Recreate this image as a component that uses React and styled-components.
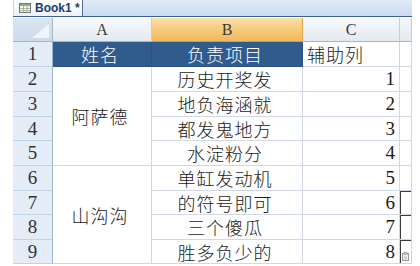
import styled, { createGlobalStyle } from "styled-components";

const GlobalStyle = createGlobalStyle`
  html, body {
    margin: 0;
    padding: 0;
    background: #ffffff;
    overflow: hidden;
  }
`;

const rows = [
  { n: 1, h: 25 },
  { n: 2, h: 25 },
  { n: 3, h: 25 },
  { n: 4, h: 24 },
  { n: 5, h: 25 },
  { n: 6, h: 25 },
  { n: 7, h: 24 },
  { n: 8, h: 25 },
  { n: 9, h: 24 },
];

const groups = [
  { name: "阿萨德", start: 2 },
  { name: "山沟沟", start: 6 },
];

const tasks = [
  "历史开奖发",
  "地负海涵就",
  "都发鬼地方",
  "水淀粉分",
  "单缸发动机",
  "的符号即可",
  "三个傻瓜",
  "胜多负少的",
];

function WorkbookIcon() {
  return (
    <svg width="12" height="10" viewBox="0 0 12 10">
      <rect x="0.5" y="0.5" width="11" height="9" fill="#f4f6f0" stroke="#6d7d6a" />
      <rect x="1" y="1" width="10" height="2" fill="#8fb07a" />
      <path d="M1 5.5h10M1 7.5h10M4.5 3v6.5M8 3v6.5" stroke="#9aa59a" strokeWidth="0.8" />
    </svg>
  );
}

function PasteIcon() {
  return (
    <svg width="8" height="9" viewBox="0 0 8 9">
      <rect x="0.5" y="1.5" width="6" height="7" fill="#f2f2f2" stroke="#9a9a9a" />
      <rect x="2" y="0.5" width="3" height="2" fill="#d8d8d8" stroke="#9a9a9a" strokeWidth="0.8" />
      <path d="M2 5h3M2 6.8h3" stroke="#a8a8a8" strokeWidth="0.8" />
    </svg>
  );
}

export default function App() {
  return (
    <>
      <GlobalStyle />
      <Page>
        <TabBar>
          <Tab>
            <WorkbookIcon />
            <TabLabel>Book1 *</TabLabel>
          </Tab>
        </TabBar>
        <Sheet $rows={rows.map((r) => `${r.h}px`).join(" ")}>
          <Corner>
            <CornerTriangle />
          </Corner>
          <ColHeader>A</ColHeader>
          <ColHeader $active>B</ColHeader>
          <ColHeader>C</ColHeader>
          <ColHeader $edge />

          {rows.map((r) => (
            <RowHeader key={`h${r.n}`} style={{ gridRow: r.n + 1 }}>
              {r.n}
            </RowHeader>
          ))}

          <Cell $dark style={{ gridRow: 2, gridColumn: 2 }}>姓名</Cell>
          <Cell $dark style={{ gridRow: 2, gridColumn: 3 }}>负责项目</Cell>
          <Cell $align="left" style={{ gridRow: 2, gridColumn: 4 }}>辅助列</Cell>
          <EdgeCell style={{ gridRow: 2 }} />

          {groups.map((g) => (
            <Cell
              key={g.name}
              style={{ gridRow: `${g.start + 1} / span 4`, gridColumn: 2 }}
            >
              {g.name}
            </Cell>
          ))}

          {tasks.map((t, i) => (
            <Cell key={t} style={{ gridRow: i + 3, gridColumn: 3 }}>
              {t}
            </Cell>
          ))}

          {tasks.map((t, i) => (
            <Cell
              key={`n${i}`}
              $align="right"
              $number
              style={{ gridRow: i + 3, gridColumn: 4 }}
            >
              {i + 1}
            </Cell>
          ))}

          {tasks.map((t, i) => (
            <EdgeCell key={`d${i}`} $boxed={i >= 5} style={{ gridRow: i + 3 }}>
              {i === 7 && <PasteIcon />}
            </EdgeCell>
          ))}
        </Sheet>
      </Page>
    </>
  );
}

const Page = styled.div`
  width: 420px;
  height: 266px;
  padding-left: 13px;
  box-sizing: border-box;
  background: #ffffff;
`;

const TabBar = styled.div`
  width: 399px;
  height: 16px;
  display: flex;
  background: linear-gradient(#e1ebf7, #c9daf0);
  border-bottom: 1px solid #3a5f96;
  margin-bottom: 1px;
`;

const Tab = styled.div`
  width: 70px;
  height: 16px;
  box-sizing: border-box;
  display: flex;
  align-items: center;
  gap: 4px;
  padding-left: 5px;
  background: linear-gradient(#ffffff, #edf2f8);
  border-right: 1px solid #4f6e9c;
  border-left: 1px solid #c3d1e4;
`;

const TabLabel = styled.span`
  font-family: "Liberation Sans", Arial, sans-serif;
  font-weight: bold;
  font-size: 12px;
  color: #1d3c6e;
  line-height: 16px;
`;

const Sheet = styled.div`
  display: grid;
  grid-template-columns: 40px 99px 151px 97px 12px;
  grid-template-rows: 24px ${({ $rows }) => $rows};
  font-family: "Liberation Serif", "Noto Sans CJK SC", serif;
`;

const Corner = styled.div`
  position: relative;
  background: linear-gradient(#dae4f1, #cfdbeb);
  border-right: 1px solid #9eb6ce;
  border-bottom: 1px solid #9eb6ce;
  box-sizing: border-box;
`;

const CornerTriangle = styled.div`
  position: absolute;
  right: 3px;
  bottom: 3px;
  width: 17px;
  height: 14px;
  background: #f1f4f9;
  clip-path: polygon(100% 0, 100% 100%, 0 100%);
`;

const ColHeader = styled.div`
  display: flex;
  align-items: center;
  justify-content: center;
  box-sizing: border-box;
  font-size: 16px;
  color: #3a3a3a;
  background: ${({ $active, $edge }) =>
    $active
      ? "linear-gradient(#fbe0a8, #f6c978 55%, #f1b95e)"
      : $edge
      ? "linear-gradient(#f5f7fa, #e3e8ef)"
      : "linear-gradient(#f7f9fc, #e4e9f0)"};
  border-right: 1px solid ${({ $active }) => ($active ? "#e9a44a" : "#c5cfdb")};
  border-bottom: 1px solid ${({ $active }) => ($active ? "#e39a3c" : "#9eb6ce")};
`;

const RowHeader = styled.div`
  grid-column: 1;
  display: flex;
  align-items: center;
  justify-content: center;
  box-sizing: border-box;
  background: #e4ecf7;
  border-right: 1px solid #9eb6ce;
  border-bottom: 1px solid #c3d2e4;
  font-size: 19px;
  color: #333333;
`;

const Cell = styled.div`
  display: flex;
  align-items: center;
  justify-content: ${({ $align }) =>
    $align === "left" ? "flex-start" : $align === "right" ? "flex-end" : "center"};
  padding: 0 4px 0 ${({ $align }) => ($align === "left" ? "4px" : "0")};
  box-sizing: border-box;
  background: ${({ $dark }) => ($dark ? "#2f5b8d" : "#ffffff")};
  color: ${({ $dark }) => ($dark ? "#ffffff" : "#1a1a1a")};
  border-right: 1px solid ${({ $dark }) => ($dark ? "#2a5283" : "#d0d7e5")};
  border-bottom: 1px solid ${({ $dark }) => ($dark ? "#2a5283" : "#d0d7e5")};
  font-size: ${({ $number }) => ($number ? "19px" : "18px")};
  font-weight: 300;
  letter-spacing: ${({ $number }) => ($number ? "0" : "1px")};
  white-space: nowrap;
`;

const EdgeCell = styled.div`
  grid-column: 5;
  display: flex;
  align-items: flex-end;
  justify-content: flex-end;
  padding: 0 1px 2px 0;
  box-sizing: border-box;
  background: #ffffff;
  border-bottom: 1px solid #d0d7e5;
  border-right: 1px solid #d0d7e5;
  box-shadow: ${({ $boxed }) => ($boxed ? "inset 1px 1px 0 #3c3c3c" : "none")};
`;
